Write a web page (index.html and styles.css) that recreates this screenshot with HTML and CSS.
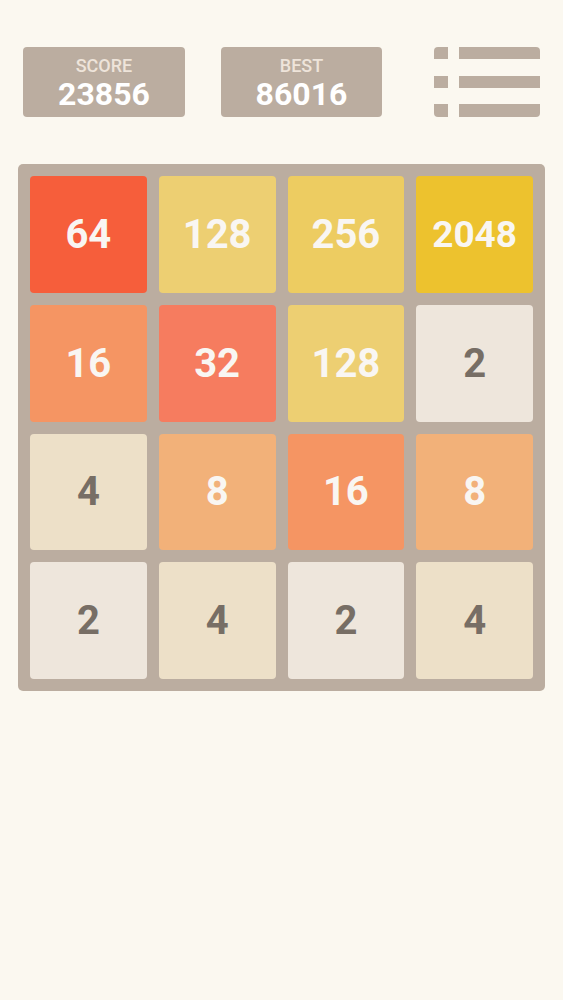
FILE: index.html
```html
<!DOCTYPE html>
<html>
<head>
<meta charset="utf-8">
<link rel="stylesheet" href="styles.css">
</head>
<body>
<div class="header">
  <div class="score-box">
    <div class="label">SCORE</div>
    <div class="value">23856</div>
  </div>
  <div class="score-box">
    <div class="label">BEST</div>
    <div class="value">86016</div>
  </div>
  <svg class="menu" width="106" height="70" viewBox="0 0 106 70">
    <path d="M4 0H14V12H0V4A4 4 0 0 1 4 0Z" fill="#bbada0"/>
    <path d="M25 0H102A4 4 0 0 1 106 4V12H25Z" fill="#bbada0"/>
    <rect x="0" y="29" width="14" height="12" fill="#bbada0"/>
    <rect x="25" y="29" width="81" height="12" fill="#bbada0"/>
    <path d="M0 57H14V70H4A4 4 0 0 1 0 66Z" fill="#bbada0"/>
    <path d="M25 57H106V66A4 4 0 0 1 102 70H25Z" fill="#bbada0"/>
  </svg>
</div>
<div class="board">
  <div class="tile t64">64</div>
  <div class="tile t128">128</div>
  <div class="tile t256">256</div>
  <div class="tile t2048">2048</div>
  <div class="tile t16">16</div>
  <div class="tile t32">32</div>
  <div class="tile t128">128</div>
  <div class="tile t2">2</div>
  <div class="tile t4">4</div>
  <div class="tile t8">8</div>
  <div class="tile t16">16</div>
  <div class="tile t8">8</div>
  <div class="tile t2">2</div>
  <div class="tile t4">4</div>
  <div class="tile t2">2</div>
  <div class="tile t4">4</div>
</div>
</body>
</html>
```
FILE: styles.css
```css
html, body {
  margin: 0;
  padding: 0;
  background: #fbf8f0;
  font-family: Roboto, "Liberation Sans", sans-serif;
}
.header {
  display: flex;
  align-items: flex-start;
  padding: 47px 0 0 23px;
}
.score-box {
  width: 162px;
  height: 70px;
  box-sizing: border-box;
  padding-top: 9px;
  background: #bbada0;
  border-radius: 4px;
  display: flex;
  flex-direction: column;
  align-items: center;
  margin-right: 36px;
}
.score-box + .score-box {
  width: 161px;
  margin-right: 52px;
}
.label {
  font-size: 18px;
  line-height: 20px;
  font-weight: 500;
  color: #eee4da;
}
.value {
  font-size: 32px;
  line-height: 34px;
  font-weight: 700;
  color: #ffffff;
  margin-top: 1px;
}
.menu {
  display: block;
}
.board {
  margin: 47px 0 0 18px;
  width: 527px;
  height: 527px;
  box-sizing: border-box;
  padding: 12px;
  background: #bbada0;
  border-radius: 5px;
  display: grid;
  grid-template-columns: repeat(4, 1fr);
  grid-template-rows: repeat(4, 1fr);
  gap: 12px;
}
.tile {
  border-radius: 4px;
  display: flex;
  align-items: center;
  justify-content: center;
  font-size: 40px;
  font-weight: 700;
  color: #f9f6f2;
}
.t2 { background: #eee6dc; color: #776e65; }
.t4 { background: #ede0c8; color: #776e65; }
.t8 { background: #f2b179; }
.t16 { background: #f59563; }
.t32 { background: #f67c5f; }
.t64 { background: #f65e3b; }
.t128 { background: #edcf72; }
.t256 { background: #edcc61; }
.t2048 { background: #edc22e; font-size: 37px; }
```
